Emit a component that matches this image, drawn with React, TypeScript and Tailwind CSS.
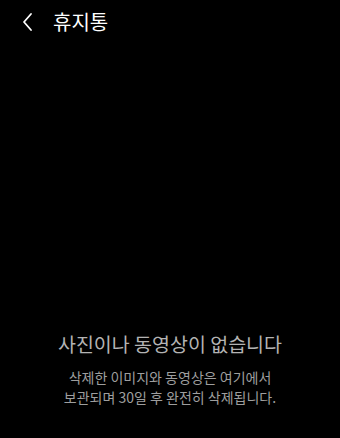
import React from 'react';

const font = { fontFamily: '"Noto Sans CJK KR", "Noto Sans", sans-serif' };

export default function App() {
  return (
    <div className="flex h-[438px] w-[340px] flex-col bg-black" style={font}>
      <header className="flex h-[44px] items-center pl-[20px]">
        <svg width="16" height="20" viewBox="0 0 16 20" fill="none" className="text-white">
          <path d="M11 2 L4 10 L11 18" stroke="currentColor" strokeWidth="1.8" strokeLinecap="round" strokeLinejoin="round" />
        </svg>
        <h1 className="ml-[17px] text-[20px] font-normal text-white">휴지통</h1>
      </header>
      <div className="flex flex-1 flex-col items-center justify-end pb-[31px]">
        <p className="text-[19.5px] leading-[28px] text-[#b3b3b3]">사진이나 동영상이 없습니다</p>
        <p className="mt-[9px] text-center text-[14px] leading-[20px] text-[#9e9e9e]">
          삭제한 이미지와 동영상은 여기에서
          <br />
          보관되며 30일 후 완전히 삭제됩니다.
        </p>
      </div>
    </div>
  );
}
